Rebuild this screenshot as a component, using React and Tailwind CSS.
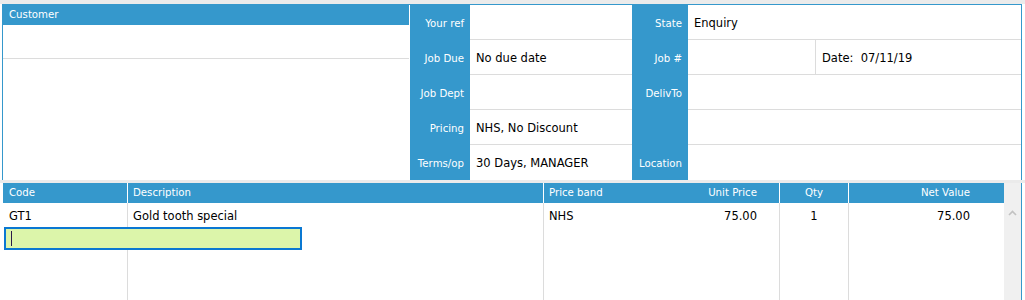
import React from "react";

const blue = "bg-[#3598cc]";

const LabelCell = ({ children }) => (
  <div className="h-[35px] bg-[#3598cc] flex items-center justify-end pr-[6px] pt-[2px] text-white text-[10.2px]">
    {children}
  </div>
);

const ValueCell = ({ children, last }) => (
  <div
    className={
      "h-[35px] bg-white flex items-center pl-[6px] pt-[3px] text-black text-[11.5px] " +
      (last ? "" : "border-b border-[#dcdcdc]")
    }
  >
    {children}
  </div>
);

const rows = [
  ["Your ref", "", "State", "Enquiry"],
  ["Job Due", "No due date", "Job #", null],
  ["Job Dept", "", "DelivTo", ""],
  ["Pricing", "NHS, No Discount", "", ""],
  ["Terms/op", "30 Days, MANAGER", "Location", ""],
];

const App = () => {
  return (
    <div
      className="w-[1025px] h-[300px] bg-white overflow-hidden"
      style={{ fontFamily: '"DejaVu Sans", Verdana, sans-serif' }}
    >
      {/* top strip */}
      <div className="h-[4px] bg-[#ebebeb]" />

      {/* Header details */}
      <div className="pl-[2px] flex">
        <div className="w-[1020px] h-[176px] border-l border-t border-r border-[#3598cc] flex">
          {/* Customer */}
          <div className="w-[406px] flex flex-col">
            <div className={"h-[20px] " + blue + " text-white text-[10.2px] pl-[6px] flex items-center"}>
              Customer
            </div>
            <div className="h-[34px] border-b border-[#dcdcdc]" />
            <div className="flex-1" />
          </div>
          <div className="w-[1px] bg-white" />

          {/* Fields grid */}
          <div className="grid grid-cols-[60px_162px_56px_333px]">
            {rows.map((r, i) => {
              const last = i === rows.length - 1;
              return (
                <React.Fragment key={i}>
                  <LabelCell>{r[0]}</LabelCell>
                  <ValueCell last={last}>{r[1]}</ValueCell>
                  <LabelCell>{r[2]}</LabelCell>
                  {r[3] === null ? (
                    <div className="h-[35px] flex border-b border-[#dcdcdc]">
                      <div className="w-[128px] border-r border-[#dcdcdc]" />
                      <div className="flex-1 flex items-center pl-[6px] pt-[3px] text-[11.5px] text-black whitespace-pre">
                        {"Date:  07/11/19"}
                      </div>
                    </div>
                  ) : (
                    <ValueCell last={last}>{r[3]}</ValueCell>
                  )}
                </React.Fragment>
              );
            })}
          </div>
        </div>
      </div>

      {/* gap */}
      <div className="h-[3px] bg-[#ebebeb]" />

      {/* Lines table */}
      <div className="flex pl-[3px] h-[117px]">
        <div className="w-[1001px] flex flex-col">
          {/* header */}
          <div className={"h-[20px] " + blue + " flex text-white text-[10.2px]"}>
            <div className="w-[124px] pl-[6px] flex items-center">Code</div>
            <div className="w-[1px] bg-white" />
            <div className="w-[415px] pl-[5px] flex items-center">Description</div>
            <div className="w-[1px] bg-white" />
            <div className="w-[235px] pl-[5px] pr-[22px] flex items-center justify-between">
              <span>Price band</span>
              <span>Unit Price</span>
            </div>
            <div className="w-[1px] bg-white" />
            <div className="w-[68px] flex items-center justify-center">Qty</div>
            <div className="w-[1px] bg-white" />
            <div className="flex-1 pr-[34px] flex items-center justify-end">Net Value</div>
          </div>

          {/* body */}
          <div className="flex-1 flex text-[11.5px] text-black relative">
            <div className="w-[124px] border-r border-[#dcdcdc] box-content">
              <div className="h-[24px] pl-[6px] pt-[4px] flex items-center">GT1</div>
            </div>
            <div className="w-[415px] border-r border-[#dcdcdc] box-content">
              <div className="h-[24px] pl-[5px] pt-[4px] flex items-center">Gold tooth special</div>
            </div>
            <div className="w-[235px] border-r border-[#dcdcdc] box-content">
              <div className="h-[24px] pl-[5px] pr-[22px] pt-[4px] flex items-center justify-between">
                <span>NHS</span>
                <span>75.00</span>
              </div>
            </div>
            <div className="w-[68px] border-r border-[#dcdcdc] box-content">
              <div className="h-[24px] pt-[4px] flex items-center justify-center">1</div>
            </div>
            <div className="flex-1">
              <div className="h-[24px] pr-[34px] pt-[4px] flex items-center justify-end">75.00</div>
            </div>

            {/* editing row */}
            <div className="absolute left-[1px] top-[24px] w-[298px] h-[23px] border-2 border-[#0a78d2] bg-[#dcf5aa] flex items-center pl-[5px]">
              <div className="w-[1px] h-[15px] bg-[#2a1a4a]" />
            </div>
          </div>
        </div>

        {/* scrollbar */}
        <div className="w-[17px] bg-[#f0f0f0] flex justify-center pt-[27px]">
          <svg width="9" height="6" viewBox="0 0 9 6">
            <polyline points="1,5 4.5,1.5 8,5" fill="none" stroke="#c2c2c2" strokeWidth="1.6" />
          </svg>
        </div>
        <div className="w-[1px] bg-[#3598cc]" />
      </div>
    </div>
  );
};

export default App;
